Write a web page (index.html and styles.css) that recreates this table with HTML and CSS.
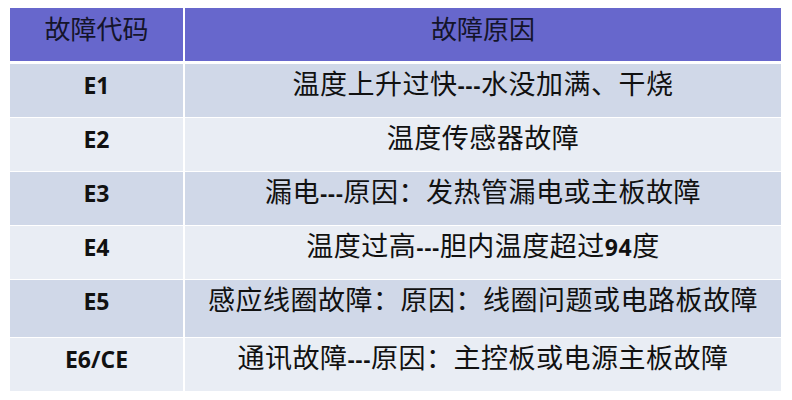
FILE: index.html
```html
<!DOCTYPE html>
<html lang="zh-CN">
<head>
<meta charset="utf-8">
<title>故障代码</title>
<link rel="stylesheet" href="styles.css">
</head>
<body>
<div class="fault-table">
  <div class="cell head">故障代码</div>
  <div class="cell head">故障原因</div>

  <div class="cell odd code">E1</div>
  <div class="cell odd reason">温度上升过快<span class="dash">---</span>水没加满、干烧</div>

  <div class="cell even code">E2</div>
  <div class="cell even reason">温度传感器故障</div>

  <div class="cell odd code">E3</div>
  <div class="cell odd reason">漏电<span class="dash">---</span>原因：发热管漏电或主板故障</div>

  <div class="cell even code">E4</div>
  <div class="cell even reason">温度过高<span class="dash">---</span>胆内温度超过<span class="num">94</span>度</div>

  <div class="cell odd code tall">E5</div>
  <div class="cell odd reason tall">感应线圈故障：原因：线圈问题或电路板故障</div>

  <div class="cell even code">E6/CE</div>
  <div class="cell even reason">通讯故障<span class="dash">---</span>原因：主控板或电源主板故障</div>
</div>
</body>
</html>
```

FILE: styles.css
```css
html, body {
  margin: 0;
  padding: 0;
  background: #ffffff;
}

.fault-table {
  display: grid;
  grid-template-columns: 173px 596px;
  column-gap: 2px;
  row-gap: 1px;
  margin: 8px 0 0 10px;
  color: #111111;
  font-family: "Noto Sans CJK SC", sans-serif;
}

.cell {
  box-sizing: border-box;
  height: 53px;
  padding-top: 6px;
  line-height: 30px;
  text-align: center;
  white-space: nowrap;
  font-size: 27px;
}

.cell.tall {
  height: 57px;
}

.head {
  background: #6767cc;
  margin-bottom: 2px;
  font-size: 26px;
  color: #14142a;
  padding-top: 5px;
}

.odd {
  background: #d0d8e8;
}

.even {
  background: #e9edf4;
}

.code {
  font-family: "Open Sans", "Liberation Sans", sans-serif;
  font-weight: 700;
  font-size: 23px;
}

.reason {
  letter-spacing: 0.5px;
  padding-top: 4px;
}

.dash {
  font-family: "Liberation Sans", sans-serif;
  font-weight: 700;
  font-size: 22px;
  letter-spacing: 0.5px;
  vertical-align: 1px;
}

.num {
  font-family: "Open Sans", "Liberation Sans", sans-serif;
  font-weight: 700;
  font-size: 23px;
}
```
